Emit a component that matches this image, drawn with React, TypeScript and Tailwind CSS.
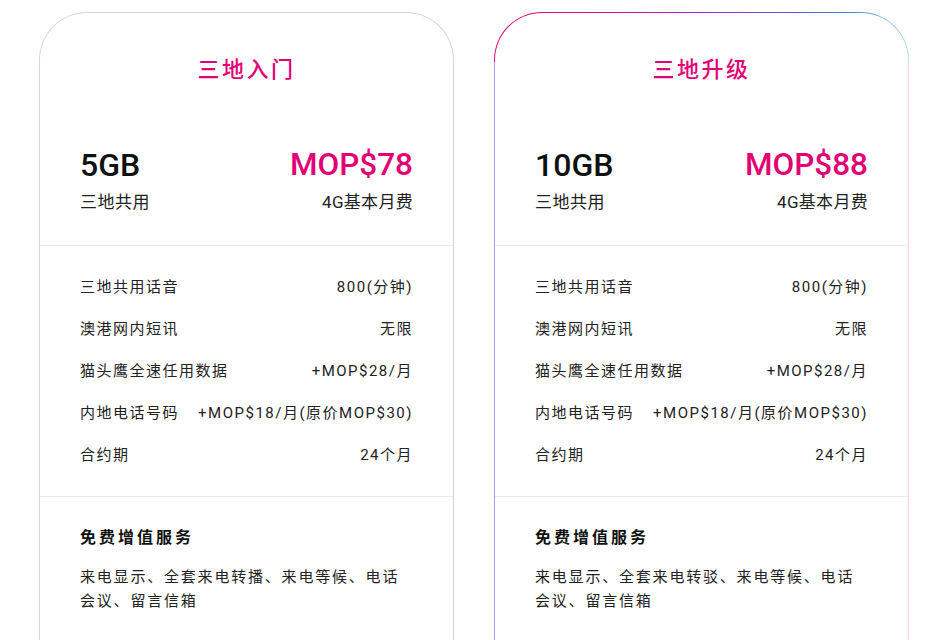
import React from "react";

type Plan = {
  title: string;
  data: string;
  price: string;
  forward: string;
  featured?: boolean;
};

const plans: Plan[] = [
  { title: "三地入门", data: "5GB", price: "MOP$78", forward: "转播" },
  { title: "三地升级", data: "10GB", price: "MOP$88", forward: "转驳", featured: true },
];

const rows: [string, string][] = [
  ["三地共用话音", "800(分钟)"],
  ["澳港网内短讯", "无限"],
  ["猫头鹰全速任用数据", "+MOP$28/月"],
  ["内地电话号码", "+MOP$18/月(原价MOP$30)"],
  ["合约期", "24个月"],
];

function CardBody({ plan }: { plan: Plan }) {
  return (
    <div className="flex flex-col">
      <div className="flex flex-col px-[40px] pt-[41px] pb-[31px]">
        <div className="text-center text-[22px] leading-[32px] tracking-[2.5px] font-medium text-[#e20074]">
          {plan.title}
        </div>
        <div className="mt-[59px] flex justify-between items-start">
          <div className="flex flex-col">
            <div className="text-[32px] leading-[40px] font-medium text-[#111]">{plan.data}</div>
            <div className="mt-[5px] text-[17px] leading-[24px] tracking-[0.5px] text-[#222]">三地共用</div>
          </div>
          <div className="flex flex-col items-end">
            <div className="text-[31.5px] leading-[40px] font-medium text-[#e20074]">{plan.price}</div>
            <div className="mt-[5px] text-[17px] leading-[24px] tracking-[0.3px] text-[#222]">4G基本月费</div>
          </div>
        </div>
      </div>
      <div className="border-t border-[#ebebeb] px-[40px] py-[20px] flex flex-col">
        {rows.map(([k, v]) => (
          <div key={k} className="h-[42px] flex items-center justify-between text-[15px] tracking-[1.5px] text-[#222]">
            <span>{k}</span>
            <span>{v}</span>
          </div>
        ))}
      </div>
      <div className="border-t border-[#ebebeb] px-[40px] pt-[29px] pb-[60px] flex flex-col">
        <div className="text-[16px] leading-[24px] font-bold tracking-[3px] text-[#111]">免费增值服务</div>
        <div className="mt-[15px] text-[15px] leading-[24px] tracking-[1.8px] text-[#222]">
          来电显示、全套来电{plan.forward}、来电等候、电话会议、留言信箱
        </div>
      </div>
    </div>
  );
}

export default function App() {
  return (
    <div className="h-[640px] w-[928px] overflow-hidden bg-white font-['Roboto','Noto_Sans_CJK_SC',sans-serif]">
      <div className="flex gap-[40px] pl-[39px] pt-[12px]">
        {plans.map((p) =>
          p.featured ? (
            <div
              key={p.title}
              className="w-[415px] h-[700px] rounded-t-[48px] p-px pb-0 bg-no-repeat bg-[image:linear-gradient(90deg,#e5007d_0%,#d00c95_25%,#9a28cf_50%,#5a56da_70%,#3d80d8_85%,#b4e2f0_100%),linear-gradient(90deg,#9ea6e2_50%,#ffd3ea_50%)] bg-[length:100%_50px,100%_100%]"
            >
              <div className="h-full rounded-t-[47px] bg-white">
                <CardBody plan={p} />
              </div>
            </div>
          ) : (
            <div
              key={p.title}
              className="w-[415px] h-[700px] rounded-t-[48px] border border-b-0 border-[#d6d6d6] bg-white"
            >
              <CardBody plan={p} />
            </div>
          )
        )}
      </div>
    </div>
  );
}
